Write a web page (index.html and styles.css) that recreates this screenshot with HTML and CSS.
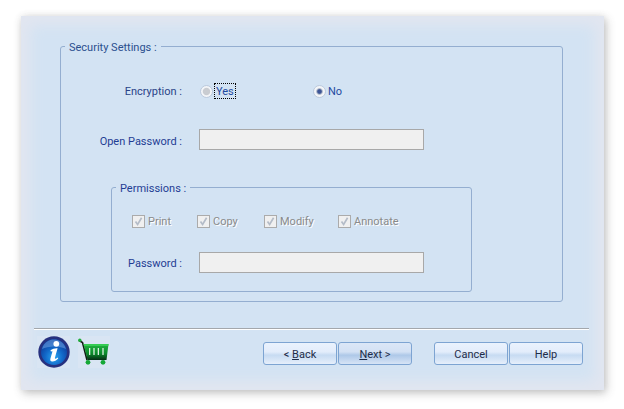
FILE: index.html
```html
<!DOCTYPE html>
<html lang="en">
<head>
<meta charset="utf-8">
<title>Security Settings</title>
<link rel="stylesheet" href="styles.css">
</head>
<body>
<main class="window">
  <fieldset class="group outer">
    <legend>Security Settings :</legend>
    <div class="row encryption">
      <span class="label">Encryption :</span>
      <div class="radios">
        <span class="radio-item yes"><i class="radio"></i><span class="focus">Yes</span></span>
        <span class="radio-item"><i class="radio checked"></i><span class="radio-text">No</span></span>
      </div>
    </div>
    <div class="row open-password">
      <span class="label">Open Password :</span>
      <span class="input"></span>
    </div>
    <fieldset class="group inner">
      <legend>Permissions :</legend>
      <div class="checks">
        <span class="check-item print"><i class="check"><svg width="11" height="11" viewBox="0 0 11 11"><path d="M2.5 5.5 4.6 8.4 8.6 1.8" fill="none" stroke="#b4bcc8" stroke-width="1.7"/></svg></i>Print</span>
        <span class="check-item copy"><i class="check"><svg width="11" height="11" viewBox="0 0 11 11"><path d="M2.5 5.5 4.6 8.4 8.6 1.8" fill="none" stroke="#b4bcc8" stroke-width="1.7"/></svg></i>Copy</span>
        <span class="check-item modify"><i class="check"><svg width="11" height="11" viewBox="0 0 11 11"><path d="M2.5 5.5 4.6 8.4 8.6 1.8" fill="none" stroke="#b4bcc8" stroke-width="1.7"/></svg></i>Modify</span>
        <span class="check-item"><i class="check"><svg width="11" height="11" viewBox="0 0 11 11"><path d="M2.5 5.5 4.6 8.4 8.6 1.8" fill="none" stroke="#b4bcc8" stroke-width="1.7"/></svg></i>Annotate</span>
      </div>
      <div class="row password">
        <span class="label">Password :</span>
        <span class="input"></span>
      </div>
    </fieldset>
  </fieldset>
  <div class="separator"></div>
  <footer class="footer">
    <div class="icons">
      <svg class="icon-info" width="33" height="32" viewBox="0 0 33 32">
        <defs>
          <radialGradient id="ib" cx="50%" cy="70%" r="62%">
            <stop offset="0" stop-color="#2aa6f2"/>
            <stop offset="0.55" stop-color="#1268c8"/>
            <stop offset="1" stop-color="#0f3f9e"/>
          </radialGradient>
        </defs>
        <rect width="33" height="32" fill="#d9e5f3"/>
        <circle cx="17" cy="16" r="15.700" fill="#27317f"/>
        <circle cx="17" cy="16" r="13" fill="url(#ib)"/>
        <path d="M5 13C7 6 12 3.500 17 3.500S27 6 29 13C23 9.500 11 9.500 5 13Z" fill="#6fa6e6" opacity=".55"/>
        <circle cx="19.300" cy="7.800" r="2.900" fill="#fff"/>
        <path d="M13.500 14.300C15.500 12.800 18 12 20.600 12.200L17.900 21.800C17.700 22.700 18.400 23 19.200 22.500L20.700 21.500 21.200 22.600C19.400 24.600 17.300 25.700 15.200 25.600 13.500 25.500 13 24.400 13.400 22.800L15.500 15.300 13.900 15.500Z" fill="#fff"/>
      </svg>
      <svg class="icon-cart" width="32" height="32" viewBox="0 0 32 32">
        <defs>
          <linearGradient id="cg" x1="0" y1="0" x2="0" y2="1">
            <stop offset="0" stop-color="#22b340"/>
            <stop offset="0.6" stop-color="#0b8a2b"/>
            <stop offset="1" stop-color="#052b14"/>
          </linearGradient>
        </defs>
        <rect width="32" height="32" fill="#d9e5f3"/>
        <path d="M1 4.500 4.500 6.500 9 24" fill="none" stroke="#101a14" stroke-width="1.600"/>
        <circle cx="1.800" cy="4.300" r="1.700" fill="#1fae3c"/>
        <path d="M5.500 8H30.500L28.500 24H9.500Z" fill="url(#cg)"/>
        <path d="M5.500 8H30.500L30.300 10H6Z" fill="#35cc52"/>
        <path d="M11.700 12V19M16 12V19M20.300 12V19M25 12V19" stroke="#fff" stroke-width="1.100"/>
        <circle cx="10" cy="26.300" r="2.400" fill="#16a836"/>
        <circle cx="25" cy="26.300" r="2.400" fill="#16a836"/>
      </svg>
    </div>
    <div class="buttons">
      <div class="pair">
        <button class="btn" type="button">&lt; <u>B</u>ack</button>
        <button class="btn primary" type="button"><u>N</u>ext &gt;</button>
      </div>
      <div class="pair">
        <button class="btn" type="button">Cancel</button>
        <button class="btn" type="button">Help</button>
      </div>
    </div>
  </footer>
</main>
</body>
</html>
```

FILE: styles.css
```css
* { box-sizing: border-box; }

html, body { height: 100%; }

body {
  margin: 0;
  padding: 16px 20px 19px 21px;
  background: #fff;
  font-family: Roboto, "Liberation Sans", Arial, sans-serif;
  font-size: 11px;
  line-height: 14px;
  color: #1f3d94;
  overflow: hidden;
}

.window {
  height: 374px;
  padding: 23px 15px 0 13px;
  background: #d3e3f3;
  box-shadow: inset 0 0 14px 9px #e2e6f0, 2px 3px 9px rgba(70, 70, 70, .32), 0 0 6px rgba(120, 120, 120, .12);
}

.group {
  margin: 0;
  min-width: 0;
  border: 1px solid #94aed0;
  border-radius: 3px;
}

.group legend {
  padding: 0 4px;
  margin-left: 4px;
  color: #2b4f8f;
  height: 14px;
  line-height: 18px;
}

.outer {
  margin: 0 26px;
  padding: 29px 0 9px;
}

.inner {
  margin: 30px 0 0 50px;
  width: 361px;
  padding: 20px 0 18px;
}

.inner legend { color: #1f3d94; }

.row { display: flex; align-items: center; gap: 17px; }

.label {
  flex: none;
  padding-top: 2px;
  text-align: right;
  color: #1f3d94;
}

.outer > .row .label { width: 121px; }

.open-password .label { padding-top: 4px; }

.password .label { width: 70px; padding-top: 2px; }

.encryption .label { color: #2a4488; }

.radios { display: flex; height: 17px; padding-top: 1px; align-items: center; }

.radio-item { display: flex; align-items: center; gap: 2px; width: 113px; color: #1f4aa0; }

.radio {
  display: block;
  width: 13px;
  height: 13px;
  margin-left: 1px;
  border-radius: 50%;
  border: 1px solid #bccadd;
  background: radial-gradient(circle, #c9ccd1 0 3.200px, #f3f5f8 4.200px);
}

.radio.checked {
  background: radial-gradient(circle, #3d5596 0 1.800px, #a9b3c5 2.800px, #f3f5f8 3.800px);
}

.radio-text { padding-top: 2px; line-height: 12px; }

.focus {
  outline: 1px dotted #000;
  padding: 2px 1px 0;
  line-height: 12px;
}

.open-password { margin-top: 30px; }

.input {
  display: block;
  width: 225px;
  height: 21px;
  background: #f0f0f0;
  border: 1px solid #a8a8a8;
}

.checks { display: flex; padding-left: 20px; height: 14px; align-items: center; }

.check-item {
  display: flex;
  align-items: center;
  gap: 3px;
  padding-top: 2px;
  color: #8a8a8a;
  text-shadow: 1px 1px 0 #fff;
}

.print { width: 65px; }
.copy { width: 67px; }
.modify { width: 74px; }

.check {
  display: block;
  width: 13px;
  height: 13px;
  margin-top: -2px;
  background: #f0f0f0;
  border: 1px solid #ababab;
}

.check svg { display: block; }

.password { margin-top: 24px; }

.separator {
  margin-top: 26px;
  height: 2px;
  background: #a3a7ac;
  border-bottom: 1px solid #fff;
}

.footer {
  display: flex;
  justify-content: space-between;
  margin-top: 6px;
  padding: 0 6px 0 3px;
}

.icons { display: flex; gap: 8px; }

.buttons { display: flex; gap: 22px; padding-top: 6px; }

.pair { display: flex; gap: 1px; }

.btn {
  width: 74px;
  height: 23px;
  padding: 2px 0 0;
  font: inherit;
  color: #1e2c48;
  border: 1px solid #7da4d2;
  border-radius: 3px;
  background: linear-gradient(#eaf2fd 0, #e3edfb 42%, #c7dbf2 58%, #e6effb 100%);
}

.btn.primary {
  background: linear-gradient(#dbe7f7 0, #d3e1f4 42%, #aec8e8 58%, #d6e4f6 100%);
}
```
